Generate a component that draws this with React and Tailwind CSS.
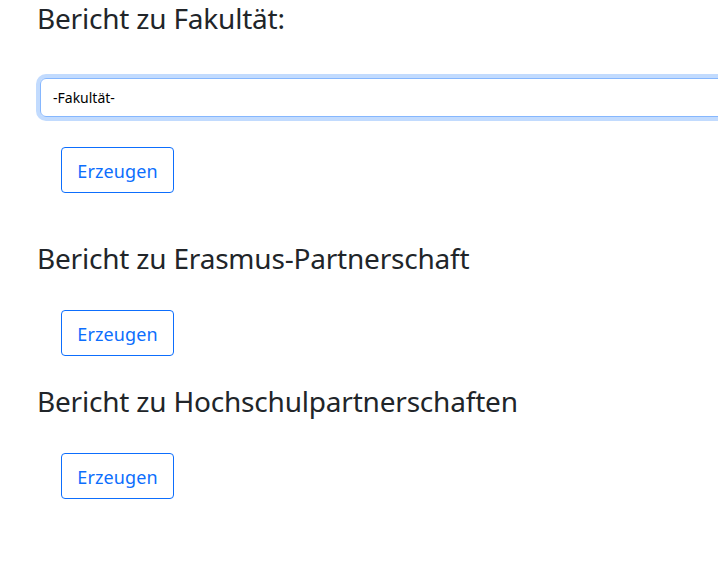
import React from 'react';

const font = { fontFamily: '"Noto Sans", "Open Sans", sans-serif' };

function GenerateButton() {
  return (
    <button
      type="button"
      className="ml-[24px] h-[46px] w-[113px] rounded-[4px] border border-[#0d6efd] bg-white pt-[3px] text-[18px] tracking-[0.1px] text-[#0d6efd]"
    >
      Erzeugen
    </button>
  );
}

export default function App() {
  return (
    <div
      className="h-[564px] w-[718px] overflow-hidden bg-white pl-[37px] text-[#212529]"
      style={font}
    >
      <h3 className="mt-[1px] h-[34px] text-[28px] leading-[34px] tracking-[-0.2px]">
        Bericht zu Fakultät:
      </h3>

      <div className="ml-[3px] mt-[43px] flex h-[39px] w-[720px] items-center rounded-[6px] border border-[#86b7fe] pl-[12px] text-[14px] text-black shadow-[0_0_0_4px_#c2dbfe]">
        -Fakultät-
      </div>

      <div className="mt-[30px]">
        <GenerateButton />
      </div>

      <h3 className="mt-[48px] h-[34px] text-[28px] leading-[34px] tracking-[-0.2px]">
        Bericht zu Erasmus-Partnerschaft
      </h3>
      <div className="mt-[35px]">
        <GenerateButton />
      </div>

      <h3 className="mt-[28px] h-[34px] text-[28px] leading-[34px] tracking-[-0.2px]">
        Bericht zu Hochschulpartnerschaften
      </h3>
      <div className="mt-[35px]">
        <GenerateButton />
      </div>
    </div>
  );
}
